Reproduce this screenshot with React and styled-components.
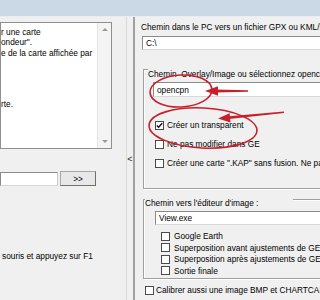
import React from "react";
import styled, { createGlobalStyle } from "styled-components";

const Global = createGlobalStyle`
  body {
    margin: 0;
    background: #f0f0f0;
    font-family: "Liberation Sans", Arial, sans-serif;
    font-size: 8.3px;
    color: #000;
  }
`;

const Page = styled.div`
  width: 320px;
  height: 300px;
  position: relative;
  overflow: hidden;
  background: #f0f0f0;
  display: flex;
  flex-direction: column;
`;

const TitleBand = styled.div`
  height: 16px;
  flex-shrink: 0;
  background: #cbd9e7;
  border-bottom: 1px solid #e8eef4;
`;

const Body = styled.div`
  flex: 1;
  display: flex;
  min-height: 0;
`;

const LeftPane = styled.div`
  width: 126px;
  flex-shrink: 0;
  display: flex;
  flex-direction: column;
  padding-top: 5px;
  box-sizing: border-box;
`;

const Memo = styled.div`
  width: 112px;
  height: 127px;
  box-sizing: border-box;
  border: 1px solid #8e8f8f;
  background: #fff;
  display: flex;
`;

const MemoText = styled.div`
  flex: 1;
  padding-top: 4px;
  line-height: 10.3px;
  white-space: pre;
  overflow: hidden;
`;

const ScrollBar = styled.div`
  width: 13px;
  background: #f4f4f4;
  border-left: 1px solid #e4e4e4;
  display: flex;
  flex-direction: column;
  justify-content: space-between;
  align-items: center;
  padding: 5px 0;
`;

const ScrollArrow = styled.div`
  width: 0;
  height: 0;
  border-left: 3px solid transparent;
  border-right: 3px solid transparent;
  ${(p) =>
    p.$down
      ? "border-top: 3px solid #9a9a9a;"
      : "border-bottom: 3px solid #9a9a9a;"}
`;

const InputRow = styled.div`
  display: flex;
  align-items: center;
  gap: 2px;
  margin-top: 22px;
`;

const Field = styled.div`
  box-sizing: border-box;
  height: ${(p) => p.$h || 14}px;
  width: ${(p) => p.$w}px;
  margin-left: ${(p) => p.$ml || 0}px;
  margin-top: ${(p) => p.$mt || 0}px;
  background: #fff;
  border: 1px solid #8a8a8a;
  border-right-color: #c8c8c8;
  border-bottom-color: #d8d8d8;
  padding-left: 3px;
  display: flex;
  align-items: center;
  white-space: nowrap;
  flex-shrink: 0;
`;

const Button = styled.div`
  width: 36px;
  height: 15px;
  box-sizing: border-box;
  background: #e8e8e8;
  border: 1px solid #a8a8a8;
  border-right-color: #707070;
  border-bottom-color: #707070;
  display: flex;
  align-items: center;
  justify-content: center;
`;

const HelpText = styled.div`
  margin-top: 65px;
  padding-left: 2px;
  line-height: 10px;
  white-space: nowrap;
`;

const Splitter = styled.div`
  width: 9px;
  flex-shrink: 0;
  box-sizing: border-box;
  border-left: 1px solid #d8d8d8;
  border-right: 2px solid #a2a2a2;
  display: flex;
  align-items: center;
  justify-content: center;
  font-size: 9px;
  color: #222;
`;

const RightPane = styled.div`
  flex: 1;
  min-width: 0;
  overflow: hidden;
  display: flex;
  flex-direction: column;
  padding-top: 5px;
`;

const Caption = styled.div`
  padding-left: 6px;
  line-height: 10px;
  white-space: nowrap;
`;

const Group = styled.div`
  margin-left: 8px;
  margin-top: ${(p) => p.$mt}px;
  width: 220px;
  height: ${(p) => p.$h}px;
  box-sizing: border-box;
  border: 1px solid #a0a0a0;
  box-shadow: inset 1px 1px 0 #fff, 1px 1px 0 #fff;
  display: flex;
  flex-direction: column;
  flex-shrink: 0;
`;

const Legend = styled.div`
  align-self: flex-start;
  margin-top: ${(p) => p.$mt}px;
  margin-left: ${(p) => p.$ml}px;
  width: ${(p) => (p.$w ? `${p.$w}px` : "auto")};
  background: #f0f0f0;
  line-height: 10px;
  white-space: nowrap;
`;

const CheckList = styled.div`
  display: flex;
  flex-direction: column;
  gap: ${(p) => p.$gap}px;
  margin-top: ${(p) => p.$mt}px;
  margin-left: ${(p) => p.$ml}px;
`;

const CheckRow = styled.div`
  display: flex;
  align-items: center;
  gap: ${(p) => p.$gap || 3}px;
  height: 10px;
  white-space: nowrap;
`;

const Box = styled.div`
  width: 9px;
  height: 9px;
  box-sizing: border-box;
  border: 1px solid #4a4a4a;
  background: #fff;
  flex-shrink: 0;
  display: flex;
  align-items: center;
  justify-content: center;
`;

const Marks = styled.svg`
  position: absolute;
  left: 0;
  top: 0;
  pointer-events: none;
`;

const Check = ({ checked, label, gap }) => (
  <CheckRow $gap={gap}>
    <Box>
      {checked && (
        <svg width="7" height="7" viewBox="0 0 7 7">
          <polyline points="0.8,3.4 2.6,5.3 6.2,1.2" fill="none" stroke="#111" strokeWidth="1.4" />
        </svg>
      )}
    </Box>
    <span>{label}</span>
  </CheckRow>
);

const memoLines = [
  "r une carte",
  "ondeur\".",
  "e de la carte affichée par",
  "",
  "",
  "",
  "",
  "rte.",
].join("\n");

export default function App() {
  return (
    <Page>
      <Global />
      <TitleBand />
      <Body>
        <LeftPane>
          <Memo>
            <MemoText>{memoLines}</MemoText>
            <ScrollBar>
              <ScrollArrow />
              <ScrollArrow $down />
            </ScrollBar>
          </Memo>
          <InputRow>
            <Field $w={58} />
            <Button>&gt;&gt;</Button>
          </InputRow>
          <HelpText>souris et appuyez sur F1</HelpText>
        </LeftPane>

        <Splitter>&lt;</Splitter>

        <RightPane>
          <Caption>Chemin dans le PC vers un fichier GPX ou KML/KMZ :</Caption>
          <Field $w={200} $ml={7} $mt={4}>C:\</Field>

          <Group $mt={19} $h={120}>
            <Legend $mt={-1} $ml={4}>
              Chemin&nbsp; Overlay/Image ou sélectionnez opencpn :
            </Legend>
            <Field $w={200} $h={15} $ml={9} $mt={3}>opencpn</Field>
            <CheckList $gap={9} $mt={23} $ml={11}>
              <Check checked label="Créer un transparent" />
              <Check label="Ne pas modifier dans GE" />
              <Check label={"Créer une carte \".KAP\" sans fusion. Ne pas"} />
            </CheckList>
          </Group>

          <Group $mt={10} $h={80}>
            <Legend $mt={-2} $ml={1} $w={148}>
              Chemin vers l'éditeur d'image :
            </Legend>
            <Field $w={200} $ml={11} $mt={3}>View.exe</Field>
            <CheckList $gap={1.5} $mt={6} $ml={17}>
              <Check label="Google Earth" gap={4} />
              <Check label="Superposition avant ajustements de GE" gap={4} />
              <Check label="Superposition après ajustements de GE" gap={4} />
              <Check label="Sortie finale" gap={4} />
            </CheckList>
          </Group>

          <CheckList $gap={0} $mt={6} $ml={10}>
            <Check label="Calibrer aussi une image BMP et CHARTCAL" gap={2} />
          </CheckList>
        </RightPane>
      </Body>

      <Marks width="320" height="300" viewBox="0 0 320 300">
        <g fill="none" stroke="#c8202b" strokeWidth="1.6">
          <ellipse cx="181" cy="91" rx="31" ry="16" transform="rotate(-3 181 91)" />
          <ellipse cx="203" cy="128" rx="54" ry="20" transform="rotate(3 203 128)" />
        </g>
        <g fill="#c8202b" stroke="none">
          <polygon points="216,89.6 248,90.3 248,91.7 216,92.4" />
          <polygon points="205,91 218,86.2 218,95.8" />
          <polygon points="229,116.3 284,111.6 284,113 229,118.9" />
          <polygon points="218,118.5 230.4,122.6 229.6,113.2" />
        </g>
      </Marks>
    </Page>
  );
}
